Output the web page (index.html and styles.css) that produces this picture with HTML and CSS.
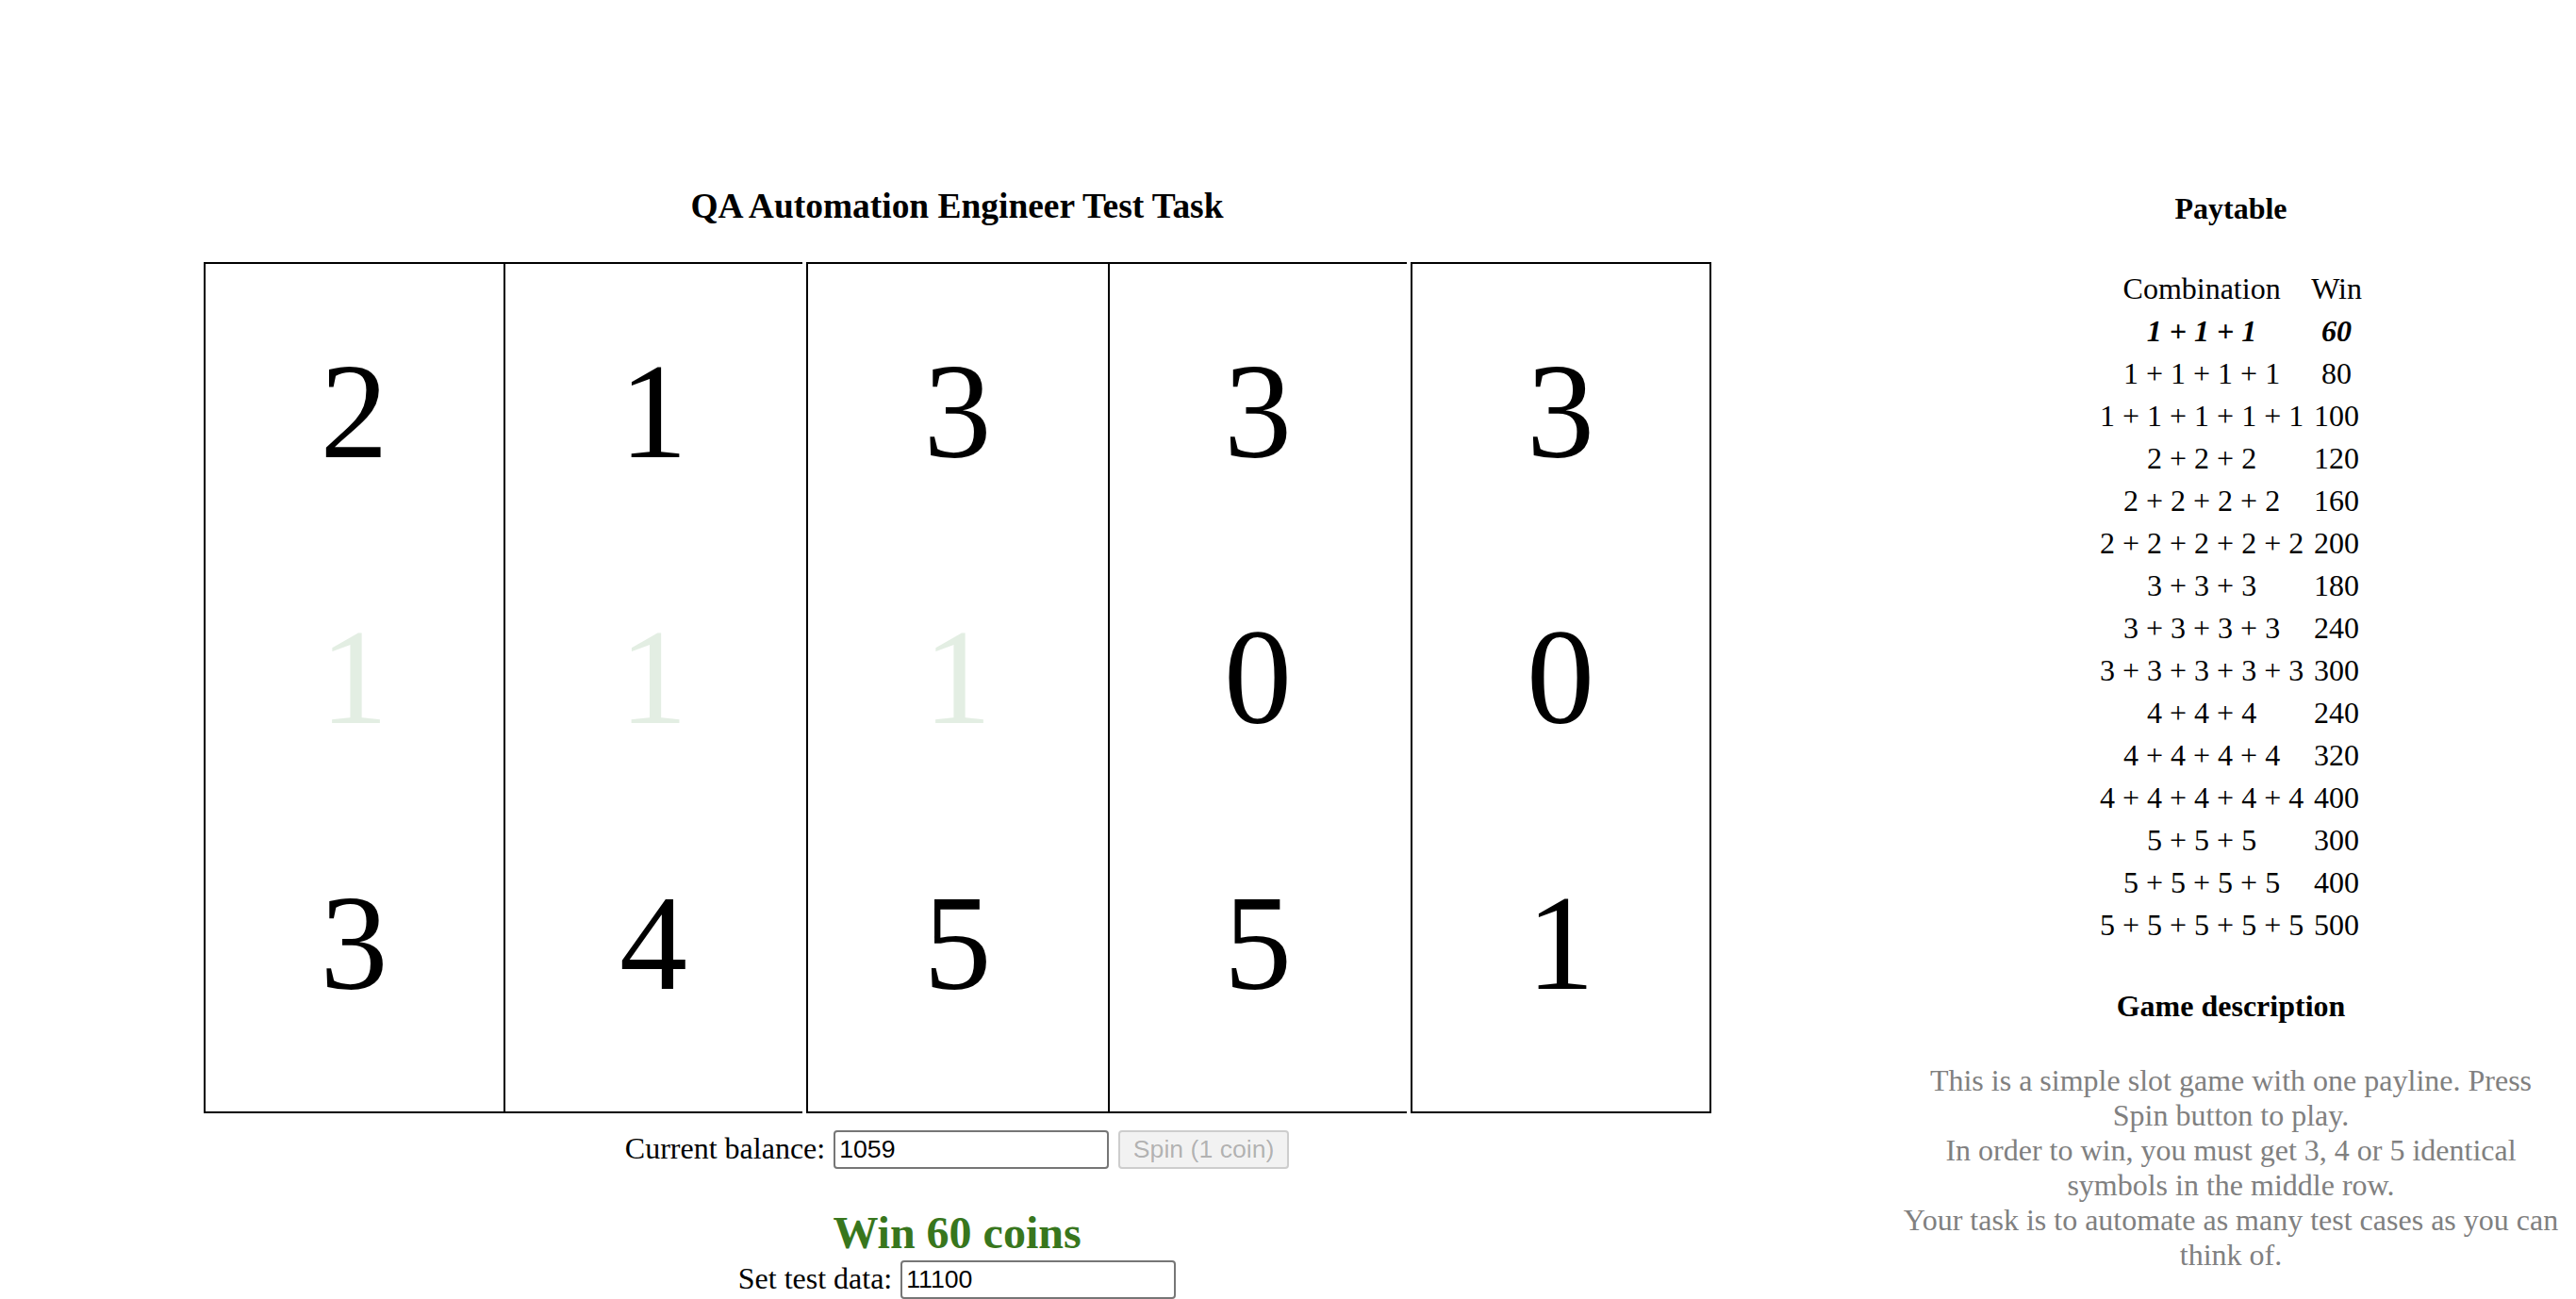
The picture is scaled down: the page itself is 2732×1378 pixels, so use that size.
FILE: index.html
```html
<!DOCTYPE html>
<html lang="en">
<head>
<meta charset="utf-8">
<title>QA Automation Engineer Test Task</title>
<link rel="stylesheet" href="styles.css">
</head>
<body>
<div class="page">
  <section class="game">
    <h1 class="title">QA Automation Engineer Test Task</h1>
    <div class="reels">
      <div class="reel">
        <div class="sym">2</div>
        <div class="sym faded">1</div>
        <div class="sym">3</div>
      </div>
      <div class="reel reel-split">
        <div class="sym">1</div>
        <div class="sym faded">1</div>
        <div class="sym">4</div>
      </div>
      <div class="reel reel-wide">
        <div class="sym">3</div>
        <div class="sym faded">1</div>
        <div class="sym">5</div>
      </div>
      <div class="reel reel-split">
        <div class="sym">3</div>
        <div class="sym">0</div>
        <div class="sym">5</div>
      </div>
      <div class="reel reel-last">
        <div class="sym">3</div>
        <div class="sym">0</div>
        <div class="sym">1</div>
      </div>
    </div>
    <div class="control-row balance-row">
      <label class="control-label" for="balance">Current balance:</label>
      <input class="text-input" id="balance" type="text" value="1059">
      <button class="spin-btn" type="button" disabled>Spin (1 coin)</button>
    </div>
    <h2 class="win-msg">Win 60 coins</h2>
    <div class="control-row test-row">
      <label class="control-label" for="testdata">Set test data:</label>
      <input class="text-input" id="testdata" type="text" value="11100">
    </div>
  </section>
  <aside class="side">
    <h3 class="side-title">Paytable</h3>
    <table class="paytable">
      <tr><td>Combination</td><td>Win</td></tr>
      <tr class="active"><td>1 + 1 + 1</td><td>60</td></tr>
      <tr><td>1 + 1 + 1 + 1</td><td>80</td></tr>
      <tr><td>1 + 1 + 1 + 1 + 1</td><td>100</td></tr>
      <tr><td>2 + 2 + 2</td><td>120</td></tr>
      <tr><td>2 + 2 + 2 + 2</td><td>160</td></tr>
      <tr><td>2 + 2 + 2 + 2 + 2</td><td>200</td></tr>
      <tr><td>3 + 3 + 3</td><td>180</td></tr>
      <tr><td>3 + 3 + 3 + 3</td><td>240</td></tr>
      <tr><td>3 + 3 + 3 + 3 + 3</td><td>300</td></tr>
      <tr><td>4 + 4 + 4</td><td>240</td></tr>
      <tr><td>4 + 4 + 4 + 4</td><td>320</td></tr>
      <tr><td>4 + 4 + 4 + 4 + 4</td><td>400</td></tr>
      <tr><td>5 + 5 + 5</td><td>300</td></tr>
      <tr><td>5 + 5 + 5 + 5</td><td>400</td></tr>
      <tr><td>5 + 5 + 5 + 5 + 5</td><td>500</td></tr>
    </table>
    <h3 class="side-title">Game description</h3>
    <p class="description">This is a simple slot game with one payline. Press Spin button to play.<br>In order to win, you must get 3, 4 or 5 identical symbols in the middle row.<br>Your task is to automate as many test cases as you can think of.</p>
  </aside>
</div>
</body>
</html>
```
FILE: styles.css
```css
html {
  overflow: hidden;
}

body {
  margin: 16px 16px 0 16px;
  font-family: "Liberation Serif", "Times New Roman", serif;
  font-size: 32px;
  color: #000;
  background: #fff;
}

.page {
  display: flex;
  align-items: flex-start;
  padding-top: 144px;
}

.game {
  width: 1998px;
  flex: none;
  display: flex;
  flex-direction: column;
  align-items: center;
}

.title {
  font-size: 37.44px;
  font-weight: bold;
  margin: 37.44px 0;
}

.reels {
  display: flex;
}

.reel {
  box-sizing: border-box;
  width: 318px;
  height: 903px;
  border-top: 2px solid #000;
  border-bottom: 2px solid #000;
  border-left: 2px solid #000;
  padding-top: 16px;
}

.reel-split {
  width: 317px;
  margin-right: 4px;
}

.reel-wide {
  width: 320px;
}

.reel-last {
  width: 319px;
  border-right: 2px solid #000;
}

.sym {
  height: 282px;
  line-height: 282px;
  font-size: 144px;
  text-align: center;
  color: #000;
}

.sym.faded {
  color: #e3eee3;
}

.control-row {
  display: flex;
  align-items: center;
  justify-content: center;
  height: 41px;
}

.balance-row {
  margin-top: 18px;
}

.control-label {
  font-size: 32px;
  line-height: 41px;
  margin-right: 9px;
  position: relative;
  top: -1px;
}

.text-input {
  box-sizing: border-box;
  width: 292px;
  height: 41px;
  margin: 0;
  padding: 2px 4px;
  border: 2px solid #767676;
  border-radius: 4px;
  font-family: "Liberation Sans", Arial, sans-serif;
  font-size: 26.67px;
  color: #000;
  background: #fff;
}

.spin-btn {
  box-sizing: border-box;
  height: 41px;
  width: 181px;
  margin: 0 0 0 10px;
  padding: 0 12px;
  border: 2px solid rgba(118, 118, 118, 0.3);
  border-radius: 4px;
  background: rgba(239, 239, 239, 0.8);
  font-family: "Liberation Sans", Arial, sans-serif;
  font-size: 26.67px;
  color: rgba(16, 16, 16, 0.3);
}

.win-msg {
  margin: 44px 0 0 0;
  font-size: 48px;
  line-height: 48px;
  font-weight: bold;
  color: #38761d;
}

.test-row {
  margin-top: 5px;
}

.side {
  width: 704px;
  flex: none;
  text-align: center;
}

.side-title {
  font-size: 32px;
  font-weight: bold;
  margin: 42.56px 0;
}

.paytable {
  margin: 0 auto;
  border-spacing: 4px;
  font-size: 32px;
}

.paytable td {
  padding: 2px;
  text-align: center;
}

.paytable .active td {
  font-weight: bold;
  font-style: italic;
}

.description {
  margin: 32px 0 0 0;
  color: #808080;
  font-size: 32px;
}
```
